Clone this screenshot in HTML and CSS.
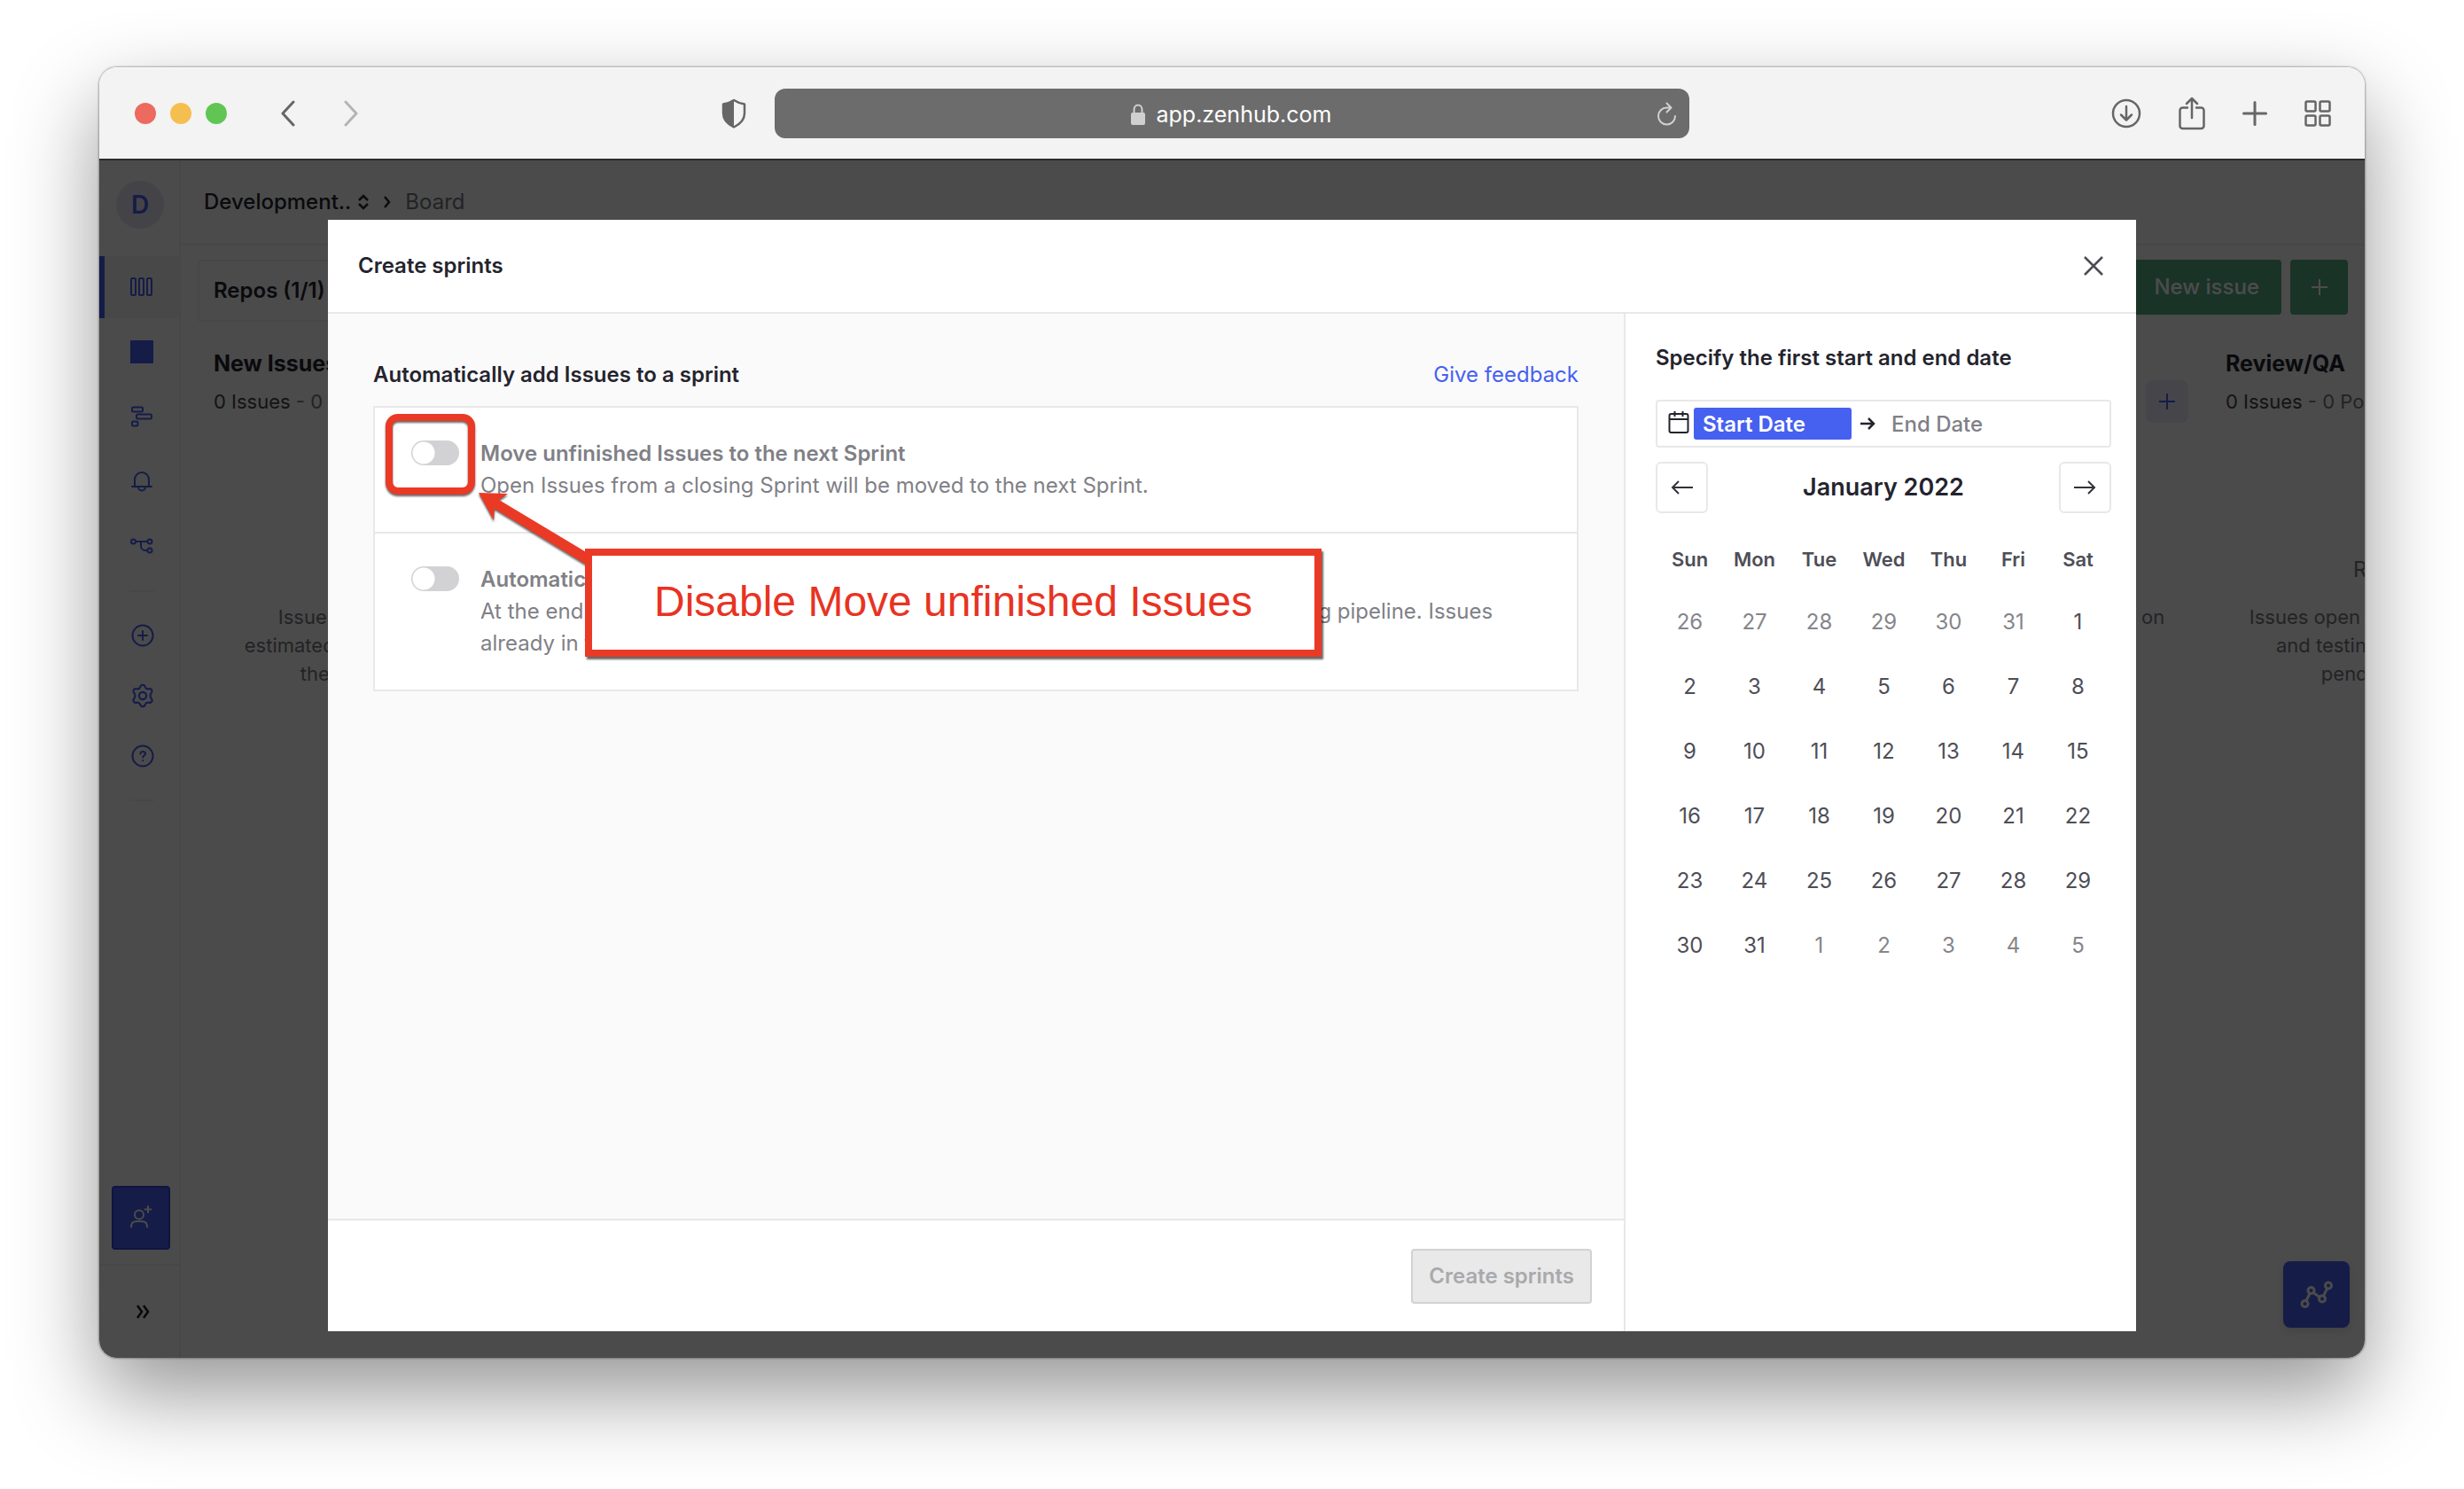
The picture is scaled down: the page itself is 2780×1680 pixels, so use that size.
FILE: index.html
```html
<!DOCTYPE html>
<html lang="en">
<head>
<meta charset="utf-8">
<title>Create sprints</title>
<link rel="stylesheet" href="styles.css">
</head>
<body>
<div class="window">
  <header class="chrome">
    <div class="chrome-left">
      <div class="lights"><span class="light red"></span><span class="light yellow"></span><span class="light green"></span></div>
      <button class="icon-btn back" aria-label="Back"><svg width="18" height="30" viewBox="0 0 18 30"><path d="M15 2 3 15l12 13" fill="none" stroke="#666" stroke-width="3" stroke-linecap="round" stroke-linejoin="round"/></svg></button>
      <button class="icon-btn forward" aria-label="Forward"><svg width="18" height="30" viewBox="0 0 18 30"><path d="M3 2l12 13L3 28" fill="none" stroke="#b4b4b4" stroke-width="3" stroke-linecap="round" stroke-linejoin="round"/></svg></button>
      <button class="icon-btn shield" aria-label="Privacy report"><svg width="28" height="34" viewBox="0 0 28 34"><path d="M14 2c3 2 7 3.600 12 4.500V17c0 7-5 12-12 15.500C7 29 2 24 2 17V6.500C7 5.600 11 4 14 2z" fill="none" stroke="#666" stroke-width="2.500" stroke-linejoin="round"/><path d="M14 2v30.500C7 29 2 24 2 17V6.500C7 5.600 11 4 14 2z" fill="#666"/></svg></button>
    </div>
    <div class="address">
      <svg width="16" height="24" viewBox="0 0 16 24"><path d="M3.500 11V6.500a4.500 5 0 0 1 9 0V11" fill="none" stroke="#d0d0d0" stroke-width="2"/><rect y="10" width="16" height="14" rx="2" fill="#d0d0d0"/></svg>
      <input class="url" type="text" aria-label="Address" value="app.zenhub.com">
      <button class="icon-btn reload" aria-label="Reload"><svg width="22" height="28" viewBox="0 0 22 28"><path d="M20 16a9.500 9.500 0 1 1-9.500-9.500h4M10.500 1.500l5 5-5 5" fill="none" stroke="#d0d0d0" stroke-width="2" stroke-linecap="round" stroke-linejoin="round"/></svg></button>
    </div>
    <div class="chrome-right">
      <button class="icon-btn" aria-label="Downloads"><svg width="34" height="34" viewBox="0 0 34 34" fill="none" stroke="#666" stroke-width="2.500" stroke-linecap="round" stroke-linejoin="round"><circle cx="17" cy="17" r="15"/><path d="M17 9v15M11 18.500l6 6 6-6"/></svg></button>
      <button class="icon-btn share" aria-label="Share"><svg width="30" height="38" viewBox="0 0 30 38" fill="none" stroke="#666" stroke-width="2.500" stroke-linecap="round" stroke-linejoin="round"><path d="M10 12.500H4.500a3 3 0 0 0-3 3V33a3 3 0 0 0 3 3h21a3 3 0 0 0 3-3V15.500a3 3 0 0 0-3-3H20M15 24V2M9 8l6-6 6 6"/></svg></button>
      <button class="icon-btn" aria-label="New tab"><svg width="28" height="28" viewBox="0 0 28 28"><path d="M14 1.500v25M1.500 14h25" stroke="#666" stroke-width="3" stroke-linecap="round"/></svg></button>
      <button class="icon-btn" aria-label="Tab overview"><svg width="30" height="30" viewBox="0 0 30 30" fill="none" stroke="#666" stroke-width="2.500"><rect x="1.500" y="1.500" width="11" height="11" rx="1.500"/><rect x="17.500" y="1.500" width="11" height="11" rx="1.500"/><rect x="1.500" y="17.500" width="11" height="11" rx="1.500"/><rect x="17.500" y="17.500" width="11" height="11" rx="1.500"/></svg></button>
    </div>
  </header>

  <div class="app">
    <nav class="sidebar" aria-label="Main">
      <div class="avatar">D</div>
      <div class="nav-main">
        <a class="nav-item active" href="#board" aria-label="Board"><svg width="26" height="22" viewBox="0 0 26 22" fill="none" stroke="#465eef" stroke-width="2"><rect x="1" y="1" width="5" height="19" rx="1.500"/><rect x="10" y="1" width="5" height="19" rx="1.500"/><rect x="19" y="1" width="5" height="19" rx="1.500"/></svg></a>
        <a class="nav-item" href="#sprints" aria-label="Sprints"><svg width="26" height="26" viewBox="0 0 26 26"><path d="M0 0h26v26H0z" fill="#465eef"/></svg></a>
        <a class="nav-item" href="#roadmap" aria-label="Roadmap"><svg width="24" height="24" viewBox="0 0 24 24" fill="none" stroke="#465eef" stroke-width="2"><rect x="1" y="1.500" width="12" height="5" rx="1.500"/><rect x="6" y="9.500" width="17" height="5" rx="1.500"/><rect x="1" y="17.500" width="6.500" height="5" rx="1.500"/></svg></a>
        <a class="nav-item" href="#notifications" aria-label="Notifications"><svg width="24" height="24" viewBox="0 0 24 24" fill="none" stroke="#465eef" stroke-width="2" stroke-linecap="round"><path d="M1 18h22M4 18V10a8 8 0 0 1 16 0v8M8 18.500a4 4 0 0 0 8 0"/></svg></a>
        <a class="nav-item" href="#workflows" aria-label="Workflows"><svg width="26" height="18" viewBox="0 0 26 18" fill="none" stroke="#465eef" stroke-width="2"><circle cx="3.500" cy="4" r="2.500"/><circle cx="22" cy="4" r="2.500"/><circle cx="22" cy="14" r="2.500"/><path d="M6 4h13.500M12 4v5a5 5 0 0 0 5 5h2.500"/></svg></a>
      </div>
      <hr class="nav-rule">
      <div class="nav-more">
        <a class="nav-item" href="#add" aria-label="Add"><svg width="26" height="26" viewBox="0 0 26 26" fill="none" stroke="#465eef" stroke-width="2" stroke-linecap="round"><circle cx="13" cy="13" r="11.500"/><path d="M13 8v10M8 13h10"/></svg></a>
        <a class="nav-item" href="#settings" aria-label="Settings"><svg width="28" height="28" viewBox="0 0 24 24" fill="none" stroke="#465eef" stroke-width="1.800" stroke-linejoin="round"><circle cx="12" cy="12" r="3.500"/><path d="M12 1.500c1.800 0 2 .6 2.500 2.200.5 1.400 1.700 2 3.100 1.700 1.700-.4 2.400-.5 3.200 1 .9 1.600.4 2-.7 3.300-1 1-1 3.600 0 4.600 1.100 1.300 1.600 1.700.7 3.300-.8 1.500-1.500 1.400-3.200 1-1.400-.3-2.600.3-3.100 1.700-.5 1.600-.7 2.200-2.500 2.200s-2-.6-2.500-2.200c-.5-1.400-1.700-2-3.100-1.700-1.700.4-2.400.5-3.200-1-.9-1.600-.4-2 .7-3.300 1-1 1-3.600 0-4.600-1.100-1.300-1.600-1.700-.7-3.300.8-1.500 1.500-1.400 3.200-1 1.400.3 2.600-.3 3.100-1.700.5-1.600.7-2.200 2.500-2.200z"/></svg></a>
        <a class="nav-item" href="#help" aria-label="Help"><svg width="26" height="26" viewBox="0 0 26 26" fill="none" stroke="#465eef" stroke-width="2" stroke-linecap="round"><circle cx="13" cy="13" r="11.500"/><path d="M10.500 10.500c0-3.500 5.500-3.300 5.500 0 0 1.800-2.800 2-2.800 4M13.100 18v.2"/></svg></a>
      </div>
      <hr class="nav-rule">
      <button class="invite" aria-label="Invite people"><svg width="26" height="28" viewBox="0 0 26 28" fill="none" stroke="#fafafa" stroke-width="2" stroke-linecap="round"><circle cx="11" cy="10.500" r="5"/><path d="M2 24.500c0-7 4-6.500 9-6.500s9-.5 9 6.500M21 1v7M17.500 4.500h7"/></svg></button>
      <button class="expand" aria-label="Expand sidebar"><svg width="16" height="16" viewBox="0 0 16 16" fill="none" stroke="#1d1d22" stroke-width="2.500"><path d="M2 1l5 7-5 7M9 1l5 7-5 7"/></svg></button>
    </nav>

    <main class="workspace">
      <div class="crumbs">
        <button class="crumb-switch">Development..<svg width="14" height="18" viewBox="0 0 14 18" fill="none" stroke="#2a2a33" stroke-width="2.500"><path d="M2 7l5-5 5 5M2 11l5 5 5-5"/></svg></button>
        <svg width="10" height="14" viewBox="0 0 10 14" fill="none" stroke="#2a2a33" stroke-width="2.500"><path d="M2 1l5 6-5 6"/></svg>
        <a class="crumb" href="#board">Board</a>
      </div>
      <div class="filters">
        <button class="repos">Repos (1/1)</button>
        <div class="actions">
          <button class="new-issue">New issue</button>
          <button class="new-more" aria-label="More"><svg width="20" height="20" viewBox="0 0 20 20"><path d="M10 1v18M1 10h18" stroke="#fff" stroke-width="2"/></svg></button>
        </div>
      </div>
      <div class="board">
        <section class="column first">
          <h2>New Issues</h2>
          <p class="count"><b>0 Issues</b> - 0 Points</p>
          <p class="empty">Issues that have not been<br>estimated and prioritized by your<br>the team will be here</p>
        </section>
        <section class="column fifth">
          <button class="add" aria-label="Add issue"><svg width="20" height="20" viewBox="0 0 20 20"><path d="M10 1v18M1 10h18" stroke="#465eef" stroke-width="2"/></svg></button>
          <p class="empty">Issues the team is now working on</p>
        </section>
        <section class="column sixth">
          <h2>Review/QA</h2>
          <p class="count"><b>0 Issues</b> - 0 Points</p>
          <p class="empty-title">Review/QA</p>
          <p class="empty">Issues open to the team for review<br>and testing. Issues are being<br>pending the merge</p>
        </section>
      </div>
    </main>
    <button class="activity" aria-label="Reports"><svg width="38" height="32" viewBox="0 0 38 32" fill="none" stroke="#fafafa" stroke-width="3"><circle cx="5.500" cy="26" r="3.500"/><circle cx="12.500" cy="11" r="3.500"/><circle cx="25" cy="20.500" r="3.500"/><circle cx="32" cy="5.500" r="3.500"/><path d="M7 22.500l4-8M15 13.500l7 5M26.500 17l4-8"/></svg></button>

    <div class="overlay">
      <div class="modal" role="dialog" aria-labelledby="dlg-title">
        <header class="modal-head">
          <h1 id="dlg-title">Create sprints</h1>
          <button class="icon-btn" aria-label="Close"><svg width="24" height="24" viewBox="0 0 24 24"><path d="M2 2l20 20M22 2 2 22" stroke="#4c4c55" stroke-width="2.500"/></svg></button>
        </header>
        <div class="modal-body">
          <div class="settings">
            <div class="settings-main">
              <div class="settings-title"><h2>Automatically add Issues to a sprint</h2><a href="#feedback">Give feedback</a></div>
              <div class="options">
                <div class="option">
                  <input class="toggle" type="checkbox" id="move">
                  <div><label for="move">Move unfinished Issues to the next Sprint</label><p>Open Issues from a closing Sprint will be moved to the next Sprint.</p></div>
                </div>
                <div class="option tall">
                  <input class="toggle" type="checkbox" id="auto">
                  <div><label for="auto">Automatically add Issues from a pipeline</label><p>At the end of a Sprint add Issues into the next Sprint automatically from the following pipeline. Issues<br>already in the Sprint are not affected.</p></div>
                </div>
                <div class="mark"></div>
                <svg class="arrow" width="136" height="92" viewBox="0 0 136 92"><path d="M4 4l33 1-10 7 105 63-5 11L22 22l-1 13z" fill="#ea3a25"/></svg>
                <div class="callout">Disable Move unfinished Issues</div>
              </div>
            </div>
            <footer class="modal-foot"><button class="submit" disabled>Create sprints</button></footer>
          </div>
          <aside class="dates">
            <h2>Specify the first start and end date</h2>
            <div class="range">
              <svg width="24" height="28" viewBox="0 0 24 28" fill="none" stroke="#24242c" stroke-width="2"><rect x="1.500" y="3" width="21" height="21" rx="2"/><path d="M1.500 9h21M7.500 0v6M16.500 0v6"/></svg>
              <input class="start" type="text" placeholder="Start Date" aria-label="Start date">
              <svg width="18" height="14" viewBox="0 0 18 14" fill="none" stroke="#24242c" stroke-width="2.500"><path d="M1 7h15M10 1l6 6-6 6"/></svg>
              <input class="end" type="text" placeholder="End Date" aria-label="End date">
            </div>
            <div class="month">
              <button aria-label="Previous month"><svg width="26" height="18" viewBox="0 0 26 18" fill="none" stroke="#33333b" stroke-width="2"><path d="M25 9H2M9 2L2 9l7 7"/></svg></button>
              <strong>January 2022</strong>
              <button aria-label="Next month"><svg width="26" height="18" viewBox="0 0 26 18" fill="none" stroke="#33333b" stroke-width="2"><path d="M1 9h23M17 2l7 7-7 7"/></svg></button>
            </div>
            <table class="calendar">
              <thead><tr><th>Sun</th><th>Mon</th><th>Tue</th><th>Wed</th><th>Thu</th><th>Fri</th><th>Sat</th></tr></thead>
              <tbody>
                <tr><td class="out"><button>26</button></td><td class="out"><button>27</button></td><td class="out"><button>28</button></td><td class="out"><button>29</button></td><td class="out"><button>30</button></td><td class="out"><button>31</button></td><td><button>1</button></td></tr>
                <tr><td><button>2</button></td><td><button>3</button></td><td><button>4</button></td><td><button>5</button></td><td><button>6</button></td><td><button>7</button></td><td><button>8</button></td></tr>
                <tr><td><button>9</button></td><td><button>10</button></td><td><button>11</button></td><td><button>12</button></td><td><button>13</button></td><td><button>14</button></td><td><button>15</button></td></tr>
                <tr><td><button>16</button></td><td><button>17</button></td><td><button>18</button></td><td><button>19</button></td><td><button>20</button></td><td><button>21</button></td><td><button>22</button></td></tr>
                <tr><td><button>23</button></td><td><button>24</button></td><td><button>25</button></td><td><button>26</button></td><td><button>27</button></td><td><button>28</button></td><td><button>29</button></td></tr>
                <tr><td><button>30</button></td><td><button>31</button></td><td class="out"><button>1</button></td><td class="out"><button>2</button></td><td class="out"><button>3</button></td><td class="out"><button>4</button></td><td class="out"><button>5</button></td></tr>
              </tbody>
            </table>
          </aside>
        </div>
      </div>
    </div>
  </div>
</div>
</body>
</html>
```
FILE: styles.css
```css
* { box-sizing: border-box; }
body {
  margin: 0;
  min-height: 100vh;
  padding: 76px 112px 148px;
  display: flex;
  background: #fff;
  font: 400 24px/32px Inter, "Liberation Sans", sans-serif;
  color: #24242e;
}
h1, h2, p { margin: 0; }
h1, h2 { font-size: 24px; line-height: 32px; font-weight: 600; }
button, input { font: inherit; color: inherit; margin: 0; }
button { padding: 0; border: 0; background: none; display: flex; align-items: center; justify-content: center; }
svg { display: block; flex: none; }
a { text-decoration: none; }

/* Browser window */
.window {
  flex: 1;
  min-width: 0;
  display: flex;
  flex-direction: column;
  border-radius: 20px;
  overflow: hidden;
  box-shadow: 0 0 2px 1px rgba(0, 0, 0, .3), 0 40px 96px rgba(0, 0, 0, .42);
}
.chrome {
  display: grid;
  grid-template-columns: 1fr minmax(0, 1032px) 1fr;
  align-items: center;
  height: 105px;
  background: #f3f3f3;
  border-top: 1px solid #fff;
  border-bottom: 2px solid #2b2b2b;
}
.chrome-left { display: flex; align-items: center; padding: 0 32px 0 40px; }
.lights { display: flex; gap: 16px; }
.light { width: 24px; height: 24px; border-radius: 50%; }
.red { background: #ed6a5e; }
.yellow { background: #f5bf4f; }
.green { background: #61c554; }
.back { margin-left: 60px; }
.forward { margin-left: 53px; }
.shield { margin-left: auto; }
.address {
  position: relative;
  display: flex;
  align-items: center;
  justify-content: center;
  gap: 13px;
  height: 56px;
  padding-top: 2px;
  border-radius: 12px;
  background: #6c6c6c;
  color: #fff;
}
.url { width: 200px; padding: 0; border: 0; background: none; font-size: 25px; line-height: 36px; }
.reload { position: absolute; right: 14px; }
.chrome-right { display: flex; align-items: center; justify-content: flex-end; gap: 42px; padding-right: 38px; }

/* Application */
.app { position: relative; flex: 1; display: flex; background: #fafafa; }
.sidebar {
  width: 92px;
  flex: none;
  display: flex;
  flex-direction: column;
  border-right: 2px solid #ededed;
}
.avatar {
  width: 54px;
  height: 54px;
  margin: 23px 19px 31px;
  border-radius: 50%;
  background: #e4e4f0;
  color: #465eef;
  font-size: 28px;
  font-weight: 600;
  line-height: 54px;
  text-align: center;
}
.nav-main { display: grid; gap: 3px; }
.nav-item { display: flex; align-items: center; justify-content: center; height: 70px; border-left: 6px solid transparent; }
.nav-more .nav-item { height: 68px; border-left-width: 8px; }
.nav-item.active { background: #f2f2f2; border-left-color: #465eef; }
.nav-rule { width: 28px; height: 2px; margin: 15px auto 15px 34px; border: 0; background: #ededed; }
.invite { width: 66px; height: 72px; margin: auto 12px 16px 14px; border: 2px solid #3048d8; border-radius: 4px; background: #465eef; }
.expand { height: 106px; padding-left: 7px; border-top: 2px solid #ededed; }
.workspace { flex: 1; min-width: 0; overflow: hidden; }
.crumbs { display: flex; align-items: center; gap: 15px; height: 96px; padding-left: 26px; border-bottom: 2px solid #ededed; }
.crumb-switch { gap: 7px; font-weight: 500; }
.crumb { color: #77777f; }
.filters { display: flex; justify-content: space-between; padding: 16px 19px 0; }
.repos { height: 70px; padding: 0 16px; border: 2px solid #ededed; border-radius: 4px; font-weight: 600; }
.actions { display: flex; gap: 10px; }
.new-issue, .new-more { height: 62px; border-radius: 4px; background: #58ab84; color: #fff; }
.new-issue { padding: 0 25px; font-weight: 500; }
.new-more { width: 65px; }
.board { display: grid; grid-template-columns: repeat(6, 412px); column-gap: 42px; padding: 31px 0 0 37px; }
.column { height: 380px; }
.first { grid-column: 1; }
.fifth { grid-column: 5; }
.sixth { grid-column: 6; }
.column h2 { font-size: 25px; font-weight: 700; }
.count { margin-top: 11px; font-size: 22px; color: #77777f; }
.count b { font-weight: 400; color: #44444c; }
.add { width: 48px; height: 48px; margin: 35px 0 0 auto; border-radius: 8px; background: #ebebf8; }
.empty-title { margin-top: 158px; text-align: center; color: #77777f; }
.empty { margin-top: 21px; font-size: 22px; text-align: center; color: #77777f; }
.first .empty { margin-top: 211px; }
.fifth .empty { margin-top: 203px; }
.activity {
  position: absolute;
  right: 17px;
  bottom: 34px;
  width: 75px;
  height: 75px;
  border-radius: 8px;
  background: #465eef;
  box-shadow: 0 4px 8px rgba(0, 0, 0, .1);
}

/* Dialog */
.overlay { position: absolute; inset: 0; display: flex; padding: 67px 258px 30px; background: rgba(0, 0, 0, .7); }
.modal { flex: 1; min-width: 0; display: flex; flex-direction: column; background: #fff; }
.modal-head { display: flex; align-items: center; justify-content: space-between; height: 106px; padding: 0 36px 0 34px; border-bottom: 2px solid #e8e8e8; }
.modal-body { flex: 1; display: flex; }
.settings { flex: 1; min-width: 0; display: flex; flex-direction: column; border-right: 2px solid #e8e8e8; }
.settings-main { flex: 1; padding: 53px 51px 0; background: #fafafa; }
.settings-title { display: flex; justify-content: space-between; margin-bottom: 19px; }
.settings-title a { color: #4660f0; }
.options { position: relative; border: 2px solid #e8e8e8; background: #fff; }
.option { display: flex; gap: 24px; min-height: 140px; padding: 34px 40px 0 41px; color: #808086; line-height: 36px; }
.option + .option { border-top: 2px solid #e8e8e8; }
.option.tall { min-height: 178px; }
.option label { font-weight: 600; }
.toggle {
  appearance: none;
  flex: none;
  width: 54px;
  height: 28px;
  margin-top: 3px;
  border-radius: 14px;
  background: radial-gradient(circle at 14px 14px, #fff 12px, #d2d2d4 13px);
}
.mark { position: absolute; left: 12px; top: 7px; width: 101px; height: 91px; border: 8px solid #ea3a25; border-radius: 14px; filter: drop-shadow(0 2px 1px rgba(0, 0, 0, .6)); }
.arrow { position: absolute; left: 113px; top: 92px; filter: drop-shadow(0 2px 1px rgba(0, 0, 0, .6)); }
.callout {
  position: absolute;
  left: 237px;
  top: 159px;
  width: 831px;
  height: 122px;
  border: 8px solid #ea3a25;
  background: #fff;
  color: #e83323;
  font: 48px/104px "Liberation Sans", Arial, sans-serif;
  text-align: center;
  box-shadow: 2px 3px 2px rgba(0, 0, 0, .6);
}
.modal-foot { display: flex; justify-content: flex-end; height: 127px; padding: 32px 36px 0; border-top: 2px solid #e8e8e8; }
.submit { height: 62px; padding: 0 18px; border: 2px solid #d2d2d2; border-radius: 4px; background: #e9e9e9; color: #a9a9ad; font-weight: 600; }
.dates { width: 576px; flex: none; padding: 34px 28px 0 34px; }
.range { display: flex; align-items: center; height: 54px; margin-top: 31px; padding-left: 12px; border: 2px solid #e8e8e8; border-radius: 4px; }
.range input { height: 36px; padding: 0 10px; border: 0; border-radius: 3px; font-weight: 500; }
.range .start { width: 178px; margin: 0 9px 0 5px; background: #4660f0; font-weight: 600; }
.range .start::placeholder { color: #fff; opacity: 1; }
.range .end { width: 178px; margin-left: 8px; background: none; }
.range .end::placeholder { color: #808086; opacity: 1; }
.month { display: flex; align-items: center; justify-content: space-between; margin-top: 16px; }
.month button { width: 59px; height: 58px; border: 2px solid #e8e8e8; border-radius: 6px; }
.month strong { font-size: 27px; font-weight: 600; }
.calendar { width: 511px; margin: 17px 0 0 2px; border-collapse: collapse; table-layout: fixed; }
.calendar th, .calendar td { height: 73px; padding: 0; text-align: center; color: #4e4e57; }
.calendar th { height: 69px; font-size: 22px; font-weight: 600; }
.calendar td button { width: 100%; height: 100%; }
.calendar .out { color: #85858b; }
```
